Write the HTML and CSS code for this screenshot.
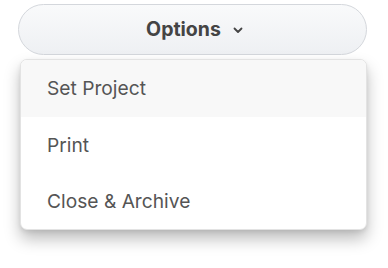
FILE: index.html
```html
<!DOCTYPE html>
<html>
<head>
<meta charset="utf-8">
<link rel="stylesheet" href="styles.css">
</head>
<body>
<div class="wrap">
  <button class="trigger">
    <span class="label">Options</span>
    <svg class="chev" width="10" height="7" viewBox="0 0 10 7"><path d="M1.5 1.5 L5 5 L8.5 1.5" fill="none" stroke="#444" stroke-width="1.8" stroke-linecap="round" stroke-linejoin="round"/></svg>
  </button>
  <ul class="menu">
    <li class="item active">Set Project</li>
    <li class="item">Print</li>
    <li class="item">Close &amp; Archive</li>
  </ul>
</div>
</body>
</html>
```
FILE: styles.css
```css
html, body {
  margin: 0;
  padding: 0;
  background: #ffffff;
}
body {
  font-family: Inter, "Noto Sans", sans-serif;
  min-height: 268px;
}
.wrap {
  padding: 4px 21px 38px 18px;
  display: flex;
  flex-direction: column;
}
.trigger {
  height: 51px;
  border: 1px solid #d4d7dc;
  border-radius: 26px;
  background: linear-gradient(#f9fafb, #eef0f3);
  display: flex;
  align-items: center;
  justify-content: center;
  gap: 12px;
  font-family: inherit;
  font-size: 19.5px;
  font-weight: 700;
  color: #444;
  padding: 0 0 1px 4px;
}
.chev {
  margin-top: 3px;
}
.menu {
  list-style: none;
  margin: 4px 0 0 2px;
  padding: 0;
  border: 1px solid #e3e3e3;
  border-radius: 7px;
  background: #fff;
  box-shadow: 0 9px 16px rgba(0,0,0,0.26), 0 2px 4px rgba(0,0,0,0.08);
  overflow: hidden;
}
.item {
  height: 57px;
  display: flex;
  align-items: center;
  padding: 0 0 2px 26px;
  box-sizing: border-box;
  font-size: 19.2px;
  color: #555;
}
.item:last-child {
  height: 55px;
}
.item.active {
  background: #f8f8f8;
}
```
